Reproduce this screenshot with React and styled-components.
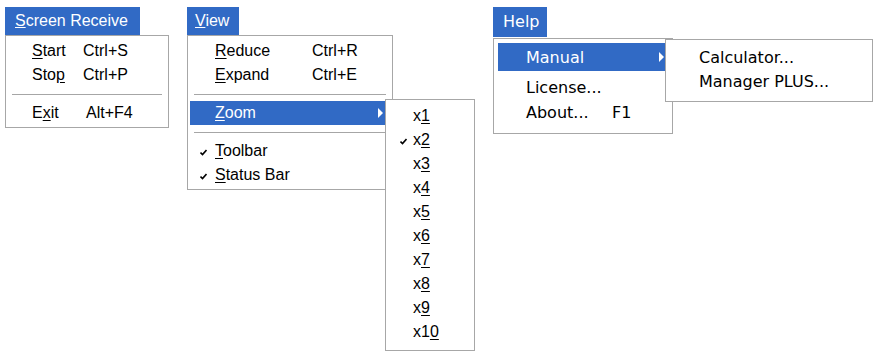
import React from "react";
import styled, { createGlobalStyle } from "styled-components";

const Global = createGlobalStyle`
  html, body { margin: 0; background: #fff; }
  body { font-family: "Liberation Sans", Arial, sans-serif; }
`;

const Page = styled.div`
  display: flex;
  align-items: flex-start;
  width: 878px;
  height: 354px;
  box-sizing: border-box;
  padding: 7px 0 0 5px;
  overflow: hidden;
`;

const Menu = styled.div`
  display: flex;
  flex-direction: column;
  align-items: flex-start;
  margin-left: ${(p) => p.$offset || 0}px;
  font-family: ${(p) => p.$font};
  font-size: 16px;
`;

const Title = styled.div`
  height: ${(p) => p.$h || 28}px;
  line-height: ${(p) => p.$h || 28}px;
  padding: 0 ${(p) => p.$pr}px 0 ${(p) => p.$pl}px;
  background: #316ac5;
  color: #fff;
  white-space: nowrap;
`;

const Dropdown = styled.div`
  position: relative;
  width: ${(p) => p.$width}px;
  box-sizing: border-box;
  margin-top: ${(p) => p.$gap || 0}px;
  border: 1px solid #a7a7a7;
  background: #fff;
  padding: ${(p) => p.$pad || "3px 2px 2px"};
`;

const Submenu = styled(Dropdown)`
  position: absolute;
  left: ${(p) => p.$left}px;
  top: ${(p) => p.$top}px;
  z-index: 2;
`;

const Item = styled.div`
  display: flex;
  align-items: center;
  height: ${(p) => p.$h || 24}px;
  margin-top: ${(p) => p.$mt || 0}px;
  background: ${(p) => (p.$active ? "#316ac5" : "transparent")};
  color: ${(p) => (p.$active ? "#fff" : "#000")};
  white-space: nowrap;
`;

const Lead = styled.span`
  display: flex;
  align-items: center;
  width: ${(p) => p.$w}px;
  padding-left: ${(p) => p.$checkPad || 0}px;
  box-sizing: border-box;
  flex: none;
`;

const Label = styled.span`
  width: ${(p) => (p.$w ? `${p.$w}px` : "auto")};
  flex: none;
  u {
    text-underline-offset: 2px;
  }
`;

const Shortcut = styled.span`
  flex: none;
`;

const Arrow = styled.span`
  margin-left: auto;
  margin-right: ${(p) => p.$mr}px;
  width: 0;
  height: 0;
  border-top: 5px solid transparent;
  border-bottom: 5px solid transparent;
  border-left: 5px solid #fff;
`;

const Separator = styled.div`
  height: 1px;
  margin: 7px 4px 6px;
  background: #a6a6a6;
`;

const Tick = () => (
  <svg width="7" height="7" viewBox="0 0 7 7" style={{ marginTop: 3 }}>
    <path d="M0.5 3.5 L2.5 5.5 L6.5 1" fill="none" stroke="#000" strokeWidth="1.6" />
  </svg>
);

const zooms = ["1", "2", "3", "4", "5", "6", "7", "8", "9", "10"];

export default function App() {
  return (
    <>
      <Global />
      <Page>
        <Menu $font={`"Liberation Sans", Arial, sans-serif`}>
          <Title $pl={10} $pr={12}>
            <u>S</u>creen Receive
          </Title>
          <Dropdown $width={164}>
            <Item>
              <Lead $w={24} />
              <Label $w={51}><u>S</u>tart</Label>
              <Shortcut>Ctrl+S</Shortcut>
            </Item>
            <Item>
              <Lead $w={24} />
              <Label $w={51}>Sto<u>p</u></Label>
              <Shortcut>Ctrl+P</Shortcut>
            </Item>
            <Separator />
            <Item>
              <Lead $w={24} />
              <Label $w={54}>E<u>x</u>it</Label>
              <Shortcut>Alt+F4</Shortcut>
            </Item>
          </Dropdown>
        </Menu>

        <Menu $offset={18} $font={`"Liberation Sans", Arial, sans-serif`}>
          <Title $pl={8} $pr={10}>
            <u>V</u>iew
          </Title>
          <Dropdown $width={206}>
            <Item>
              <Lead $w={25} />
              <Label $w={97}><u>R</u>educe</Label>
              <Shortcut>Ctrl+R</Shortcut>
            </Item>
            <Item>
              <Lead $w={25} />
              <Label $w={97}><u>E</u>xpand</Label>
              <Shortcut>Ctrl+E</Shortcut>
            </Item>
            <Separator />
            <Item $active>
              <Lead $w={25} />
              <Label><u>Z</u>oom</Label>
              <Arrow $mr={7} />
            </Item>
            <Separator />
            <Item>
              <Lead $w={25} $checkPad={10}><Tick /></Lead>
              <Label><u>T</u>oolbar</Label>
            </Item>
            <Item>
              <Lead $w={25} $checkPad={10}><Tick /></Lead>
              <Label><u>S</u>tatus Bar</Label>
            </Item>
            <Submenu $width={90} $left={197} $top={63} $pad="4px 2px 6px">
              {zooms.map((z) => (
                <Item key={z}>
                  <Lead $w={25} $checkPad={12}>{z === "2" && <Tick />}</Lead>
                  <Label>
                    x{z.slice(0, -1)}<u>{z.slice(-1)}</u>
                  </Label>
                </Item>
              ))}
            </Submenu>
          </Dropdown>
        </Menu>

        <Menu $offset={100} $font={`"DejaVu Sans", Verdana, sans-serif`}>
          <Title $h={30} $pl={10} $pr={8}>Help</Title>
          <Dropdown $width={180} $gap={1} $pad="4px 4px 8px">
            <Item $active $h={28}>
              <Lead $w={28} />
              <Label>Manual</Label>
              <Arrow $mr={4} />
            </Item>
            <Item $h={25} $mt={4}>
              <Lead $w={28} />
              <Label>License...</Label>
            </Item>
            <Item $h={25}>
              <Lead $w={28} />
              <Label $w={86}>About...</Label>
              <Shortcut>F1</Shortcut>
            </Item>
            <Submenu $width={208} $left={171} $top={0} $pad="5px 2px 8px">
              <Item>
                <Lead $w={31} />
                <Label>Calculator...</Label>
              </Item>
              <Item>
                <Lead $w={31} />
                <Label>Manager PLUS...</Label>
              </Item>
            </Submenu>
          </Dropdown>
        </Menu>
      </Page>
    </>
  );
}
